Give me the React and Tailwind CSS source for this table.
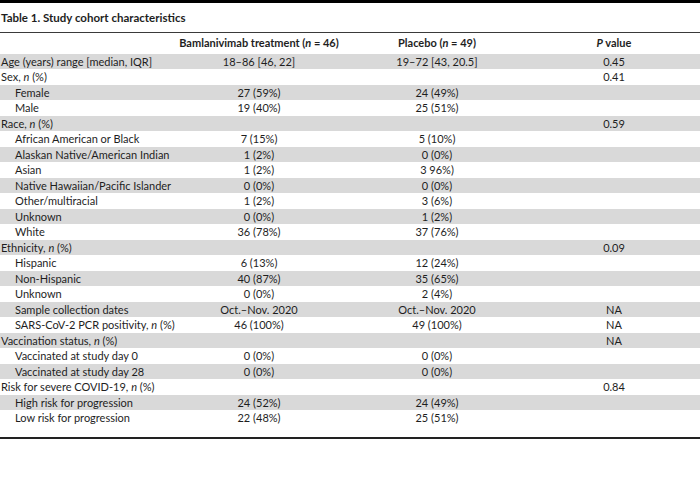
import React from 'react';

const N = () => <span className="italic">n</span>;

const rows = [
  { label: 'Age (years) range [median, IQR]', a: '18–86 [46, 22]', b: '19–72 [43, 20.5]', p: '0.45' },
  { label: <>Sex, <N /> (%)</>, p: '0.41' },
  { label: 'Female', sub: true, a: '27 (59%)', b: '24 (49%)' },
  { label: 'Male', sub: true, a: '19 (40%)', b: '25 (51%)' },
  { label: <>Race, <N /> (%)</>, p: '0.59' },
  { label: 'African American or Black', sub: true, a: '7 (15%)', b: '5 (10%)' },
  { label: 'Alaskan Native/American Indian', sub: true, a: '1 (2%)', b: '0 (0%)' },
  { label: 'Asian', sub: true, a: '1 (2%)', b: '3 96%)' },
  { label: 'Native Hawaiian/Pacific Islander', sub: true, a: '0 (0%)', b: '0 (0%)' },
  { label: 'Other/multiracial', sub: true, a: '1 (2%)', b: '3 (6%)' },
  { label: 'Unknown', sub: true, a: '0 (0%)', b: '1 (2%)' },
  { label: 'White', sub: true, a: '36 (78%)', b: '37 (76%)' },
  { label: <>Ethnicity, <N /> (%)</>, p: '0.09' },
  { label: 'Hispanic', sub: true, a: '6 (13%)', b: '12 (24%)' },
  { label: 'Non-Hispanic', sub: true, a: '40 (87%)', b: '35 (65%)' },
  { label: 'Unknown', sub: true, a: '0 (0%)', b: '2 (4%)' },
  { label: 'Sample collection dates', sub: true, a: 'Oct.–Nov. 2020', b: 'Oct.–Nov. 2020', p: 'NA' },
  { label: <>SARS-CoV-2 PCR positivity, <N /> (%)</>, sub: true, a: '46 (100%)', b: '49 (100%)', p: 'NA' },
  { label: <>Vaccination status, <N /> (%)</>, p: 'NA' },
  { label: 'Vaccinated at study day 0', sub: true, a: '0 (0%)', b: '0 (0%)' },
  { label: 'Vaccinated at study day 28', sub: true, a: '0 (0%)', b: '0 (0%)' },
  { label: <>Risk for severe COVID-19, <N /> (%)</>, p: '0.84' },
  { label: 'High risk for progression', sub: true, a: '24 (52%)', b: '24 (49%)' },
  { label: 'Low risk for progression', sub: true, a: '22 (48%)', b: '25 (51%)' },
];

const cols = 'grid grid-cols-[172px_174px_182px_172px]';

export default function App() {
  return (
    <div className="w-[700px] h-[503px] bg-white text-[#1e1e1e] text-[11px] font-['Lato','Open_Sans',sans-serif]">
      <div className="border-t-[3px] border-black" />
      {/* Title */}
      <div className="h-[29px] flex items-center pl-[1px] text-[11.5px] font-bold">
        Table 1. Study cohort characteristics
      </div>
      <div className="border-t-[1.5px] border-[#3a3a3a]" />

      {/* Header */}
      <div className={`${cols} h-[19.5px] items-end pb-[1px] font-bold`}>
        <div />
        <div className="text-center">Bamlanivimab treatment (<N /> = 46)</div>
        <div className="text-center">Placebo (<N /> = 49)</div>
        <div className="text-center"><span className="italic">P</span> value</div>
      </div>

      {/* Body */}
      <div className="mt-[1px]">
        {rows.map((r, i) => (
          <div
            key={i}
            className={`${cols} h-[15.5px] items-center ${i % 2 === 0 ? 'bg-[#d9d9d9]' : 'bg-white'}`}
          >
            <div className={`whitespace-nowrap ${r.sub ? 'pl-[15px]' : 'pl-[1px]'}`}>{r.label}</div>
            <div className="text-center">{r.a}</div>
            <div className="text-center">{r.b}</div>
            <div className="text-center">{r.p}</div>
          </div>
        ))}
      </div>
      <div className="mt-[11px] border-t-[2px] border-[#222]" />
    </div>
  );
}
